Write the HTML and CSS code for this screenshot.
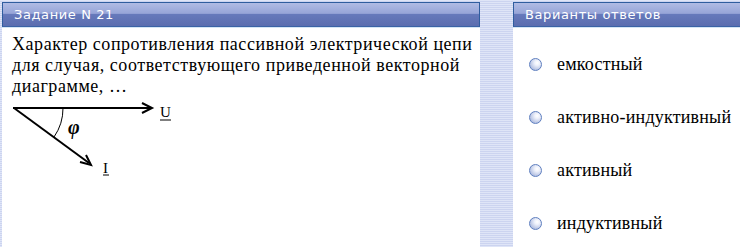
FILE: index.html
```html
<!DOCTYPE html>
<html lang="ru">
<head>
    <meta charset="UTF-8">
    <title>Задание N 21</title>
    <link rel="stylesheet" href="styles.css">
</head>
<body>
    <div class="page">
        <div class="panel task">
            <div class="panel-head">Задание N 21</div>
            <div class="panel-body">
                <p class="question">Характер сопротивления пассивной электрической цепи для случая, соответствующего приведенной векторной диаграмме, …</p>
                <svg class="diagram" width="180" height="74" viewBox="0 0 180 74">
                    <!-- U vector -->
                    <line x1="1" y1="6" x2="138" y2="6" stroke="#000" stroke-width="2"/>
                    <path d="M130 1 L140 6 L130 11" fill="none" stroke="#000" stroke-width="2"/>
                    <!-- I vector -->
                    <line x1="2" y1="6" x2="77" y2="61" stroke="#000" stroke-width="2"/>
                    <path d="M68 60 L79 63 L74 53" fill="none" stroke="#000" stroke-width="2"/>
                    <!-- angle -->
                    <path d="M51 6 A50 50 0 0 1 42 35" fill="none" stroke="#000" stroke-width="1"/>
                    <text x="56" y="32" class="phi">φ</text>
                    <text x="148" y="15" class="lbl">U</text>
                    <line x1="148" y1="18" x2="159" y2="18" stroke="#000" stroke-width="1"/>
                    <text x="91" y="71" class="lbl">I</text>
                    <line x1="91" y1="73" x2="97" y2="73" stroke="#000" stroke-width="1"/>
                </svg>
            </div>
        </div>
        <div class="panel answers">
            <div class="panel-head">Варианты ответов</div>
            <div class="panel-body">
                <ul class="options">
                    <li><span class="radio"></span>емкостный</li>
                    <li><span class="radio"></span>активно-индуктивный</li>
                    <li><span class="radio"></span>активный</li>
                    <li><span class="radio"></span>индуктивный</li>
                </ul>
            </div>
        </div>
    </div>
</body>
</html>
```

FILE: styles.css
```css
html, body {
    margin: 0;
    height: 100%;
    overflow: hidden;
}
body {
    background: repeating-linear-gradient(#dfe5f7 0, #dfe5f7 1px, #ccd4f0 1px, #ccd4f0 2px);
}
.page {
    display: flex;
    gap: 33px;
    width: 760px;
    height: 100%;
    padding: 2px 0 0 2px;
    box-sizing: border-box;
}
.panel {
    display: flex;
    flex-direction: column;
    background: white;
}
.task {
    width: 478px;
}
.answers {
    flex: 1;
}
.panel-head {
    height: 23px;
    border: 1px solid #2f5d9f;
    border-bottom-color: #3a63a6;
    background: linear-gradient(#b0bbe4 0, #97a5d8 45%, #6679bb 50%, #5b6daf 100%);
    color: white;
    font-family: "DejaVu Sans", Verdana, sans-serif;
    font-size: 13px;
    line-height: 23px;
    padding-left: 11px;
    letter-spacing: 0.6px;
    box-shadow: 0 1px 0 #d4e4f4;
}
.panel-body {
    flex: 1;
}
.question {
    margin: 7px 0 0 10px;
    font-family: "Liberation Serif", "Times New Roman", serif;
    font-size: 18px;
    line-height: 21px;
    letter-spacing: 0.55px;
    color: #000;
}
.diagram {
    display: block;
    margin: 5px 0 0 10px;
}
.phi {
    font-family: "Liberation Serif", serif;
    font-style: italic;
    font-weight: bold;
    font-size: 20px;
}
.lbl {
    font-family: "Liberation Serif", serif;
    font-size: 15px;
}
.options {
    list-style: none;
    margin: 0;
    padding: 27px 0 0 16px;
    display: flex;
    flex-direction: column;
    gap: 32px;
}
.options li {
    display: flex;
    align-items: center;
    font-family: "Liberation Serif", "Times New Roman", serif;
    font-size: 18px;
    line-height: 21px;
    letter-spacing: 0.2px;
    color: #000;
}
.radio {
    width: 11px;
    height: 11px;
    border-radius: 50%;
    border: 1px solid #5f7fbf;
    background: radial-gradient(circle at 65% 35%, #ffffff 0, #eef1fb 25%, #c3cde8 60%, #8fa3d4 100%);
    margin-right: 15px;
}
```
